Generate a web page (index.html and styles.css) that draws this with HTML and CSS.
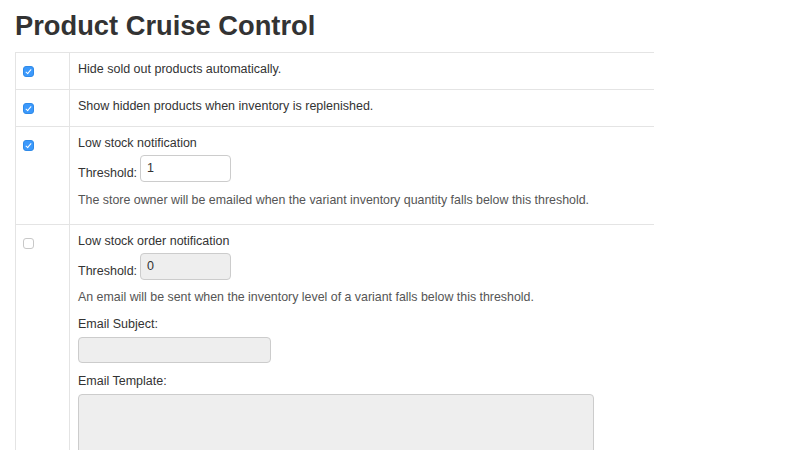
FILE: index.html
```html
<!DOCTYPE html>
<html>
<head>
<meta charset="utf-8">
<link rel="stylesheet" href="styles.css">
</head>
<body>
<div class="page">
  <h1 class="title">Product Cruise Control</h1>
  <div class="table">
    <div class="row">
      <div class="check-cell"><span class="cb checked"></span></div>
      <div class="content-cell"><div class="line">Hide sold out products automatically.</div></div>
    </div>
    <div class="row">
      <div class="check-cell"><span class="cb checked"></span></div>
      <div class="content-cell"><div class="line">Show hidden products when inventory is replenished.</div></div>
    </div>
    <div class="row">
      <div class="check-cell"><span class="cb checked"></span></div>
      <div class="content-cell">
        <div class="line">Low stock notification</div>
        <div class="threshold">
          <span class="label">Threshold:</span>
          <div class="input small">1</div>
        </div>
        <p class="help help-end">The store owner will be emailed when the variant inventory quantity falls below this threshold.</p>
      </div>
    </div>
    <div class="row">
      <div class="check-cell"><span class="cb"></span></div>
      <div class="content-cell">
        <div class="line">Low stock order notification</div>
        <div class="threshold">
          <span class="label">Threshold:</span>
          <div class="input small disabled">0</div>
        </div>
        <p class="help">An email will be sent when the inventory level of a variant falls below this threshold.</p>
        <div class="field-label">Email Subject:</div>
        <div class="input subject disabled"></div>
        <div class="field-label">Email Template:</div>
        <div class="input template disabled"></div>
      </div>
    </div>
  </div>
</div>
</body>
</html>
```
FILE: styles.css
```css
html, body {
  margin: 0;
  padding: 0;
  background: #fff;
  overflow: hidden;
}
body {
  font-family: "Liberation Sans", Arial, sans-serif;
  font-size: 12.5px;
  color: #333;
}
.page {
  padding: 0 0 0 15px;
}
.title {
  margin: 0;
  padding-top: 9px;
  font-size: 27.3px;
  line-height: 34px;
  font-weight: bold;
  color: #333;
  height: 43px;
}
.table {
  width: 638px;
  border-top: 1px solid #e4e4e4;
  border-left: 1px solid #e4e4e4;
}
.row {
  display: flex;
  border-bottom: 1px solid #e4e4e4;
}
.check-cell {
  width: 54px;
  border-right: 1px solid #e4e4e4;
  padding: 13px 0 0 7px;
  box-sizing: border-box;
}
.cb {
  display: block;
  width: 11px;
  height: 11px;
  box-sizing: border-box;
  border: 1px solid #c8c8c8;
  border-radius: 3px;
  background: #fff;
  position: relative;
}
.cb.checked {
  background: #3b99fc;
  border-color: #2f8ae8;
}
.cb.checked::after {
  content: "";
  position: absolute;
  left: 3px;
  top: 1px;
  width: 2px;
  height: 5px;
  border-right: 1.5px solid #fff;
  border-bottom: 1.5px solid #fff;
  transform: rotate(40deg);
}
.content-cell {
  flex: 1;
  padding: 7px 7px 0 8px;
}
.line {
  line-height: 18px;
  height: 18px;
  margin-bottom: 8px;
}
.row .content-cell .line:only-child {
  margin-bottom: 11px;
}
.threshold {
  display: flex;
  align-items: flex-end;
  margin-top: -5px;
}
.label {
  line-height: 18px;
  margin-right: 3px;
}
.input {
  box-sizing: border-box;
  border: 1px solid #ccc;
  border-radius: 4px;
  background: #fff;
  line-height: 16px;
  padding: 4px 6px;
  color: #333;
}
.input.small {
  width: 91px;
  height: 27px;
}
.input.disabled {
  background: #eee;
}
.help {
  margin: 8px 0 8px 0;
  line-height: 18px;
  font-size: 12.4px;
  color: #555;
}
.help.help-end {
  margin: 9px 0 15px 0;
}
.row:last-child .help {
  margin-bottom: 9px;
}
.field-label {
  line-height: 18px;
  margin-bottom: 4px;
}
.input.subject {
  width: 193px;
  height: 26px;
  margin-bottom: 9px;
}
.input.template {
  width: 516px;
  height: 120px;
}
```
